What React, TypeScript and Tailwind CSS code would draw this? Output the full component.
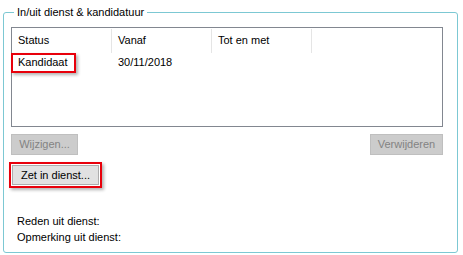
export default function App() {
  return (
    <div
      className="w-[463px] h-[255px] bg-white pt-[5px] pl-[3px] text-[11px] text-black"
      style={{ fontFamily: '"Liberation Sans", Arial, sans-serif' }}
    >
      <fieldset className="w-[455px] h-[248px] border border-[#7cc8d3] rounded-[3px] pl-[7px] pr-[14px]">
        <legend className="ml-[3px] px-[3px] leading-[14px]">In/uit dienst &amp; kandidatuur</legend>

        {/* list view */}
        <div className="mt-[8px] h-[100px] border border-[#828790] bg-white">
          <div className="flex h-[25px] items-center">
            <div className="w-[100px] pl-[6px] border-r border-[#e5e5e5] h-[24px] flex items-center">Status</div>
            <div className="w-[100px] pl-[6px] border-r border-[#e5e5e5] h-[24px] flex items-center">Vanaf</div>
            <div className="w-[100px] pl-[6px] border-r border-[#e5e5e5] h-[24px] flex items-center">Tot en met</div>
          </div>
          <div className="flex h-[18px] items-center">
            <div className="w-[100px] pl-[6px]">
              <span className="relative">
                Kandidaat
                <span className="absolute -left-[7px] -top-[3px] w-[65px] h-[20px] border-2 border-[#e8000b] shadow-[2px_2px_3px_rgba(0,0,0,0.3)]" />
              </span>
            </div>
            <div className="w-[100px] pl-[6px]">30/11/2018</div>
          </div>
        </div>

        {/* buttons */}
        <div className="mt-[7px] flex justify-between">
          <button className="h-[21px] w-[67px] bg-[#cccccc] border border-[#bfbfbf] text-[#838383] leading-none">
            Wijzigen...
          </button>
          <button className="h-[21px] w-[73px] bg-[#cccccc] border border-[#bfbfbf] text-[#838383] leading-none">
            Verwijderen
          </button>
        </div>

        <div className="mt-[10px] ml-[1px] relative w-[87px]">
          <button className="h-[20px] w-[87px] bg-[#e1e1e1] border border-[#adadad] leading-none">
            Zet in dienst...
          </button>
          <span className="absolute -left-[3px] -top-[3px] w-[93px] h-[26px] border-2 border-[#e8000b] shadow-[2px_2px_3px_rgba(0,0,0,0.3)]" />
        </div>

        <div className="mt-[28px] pl-[6px] leading-[16px]">
          <div>Reden uit dienst:</div>
          <div>Opmerking uit dienst:</div>
        </div>
      </fieldset>
    </div>
  );
}
